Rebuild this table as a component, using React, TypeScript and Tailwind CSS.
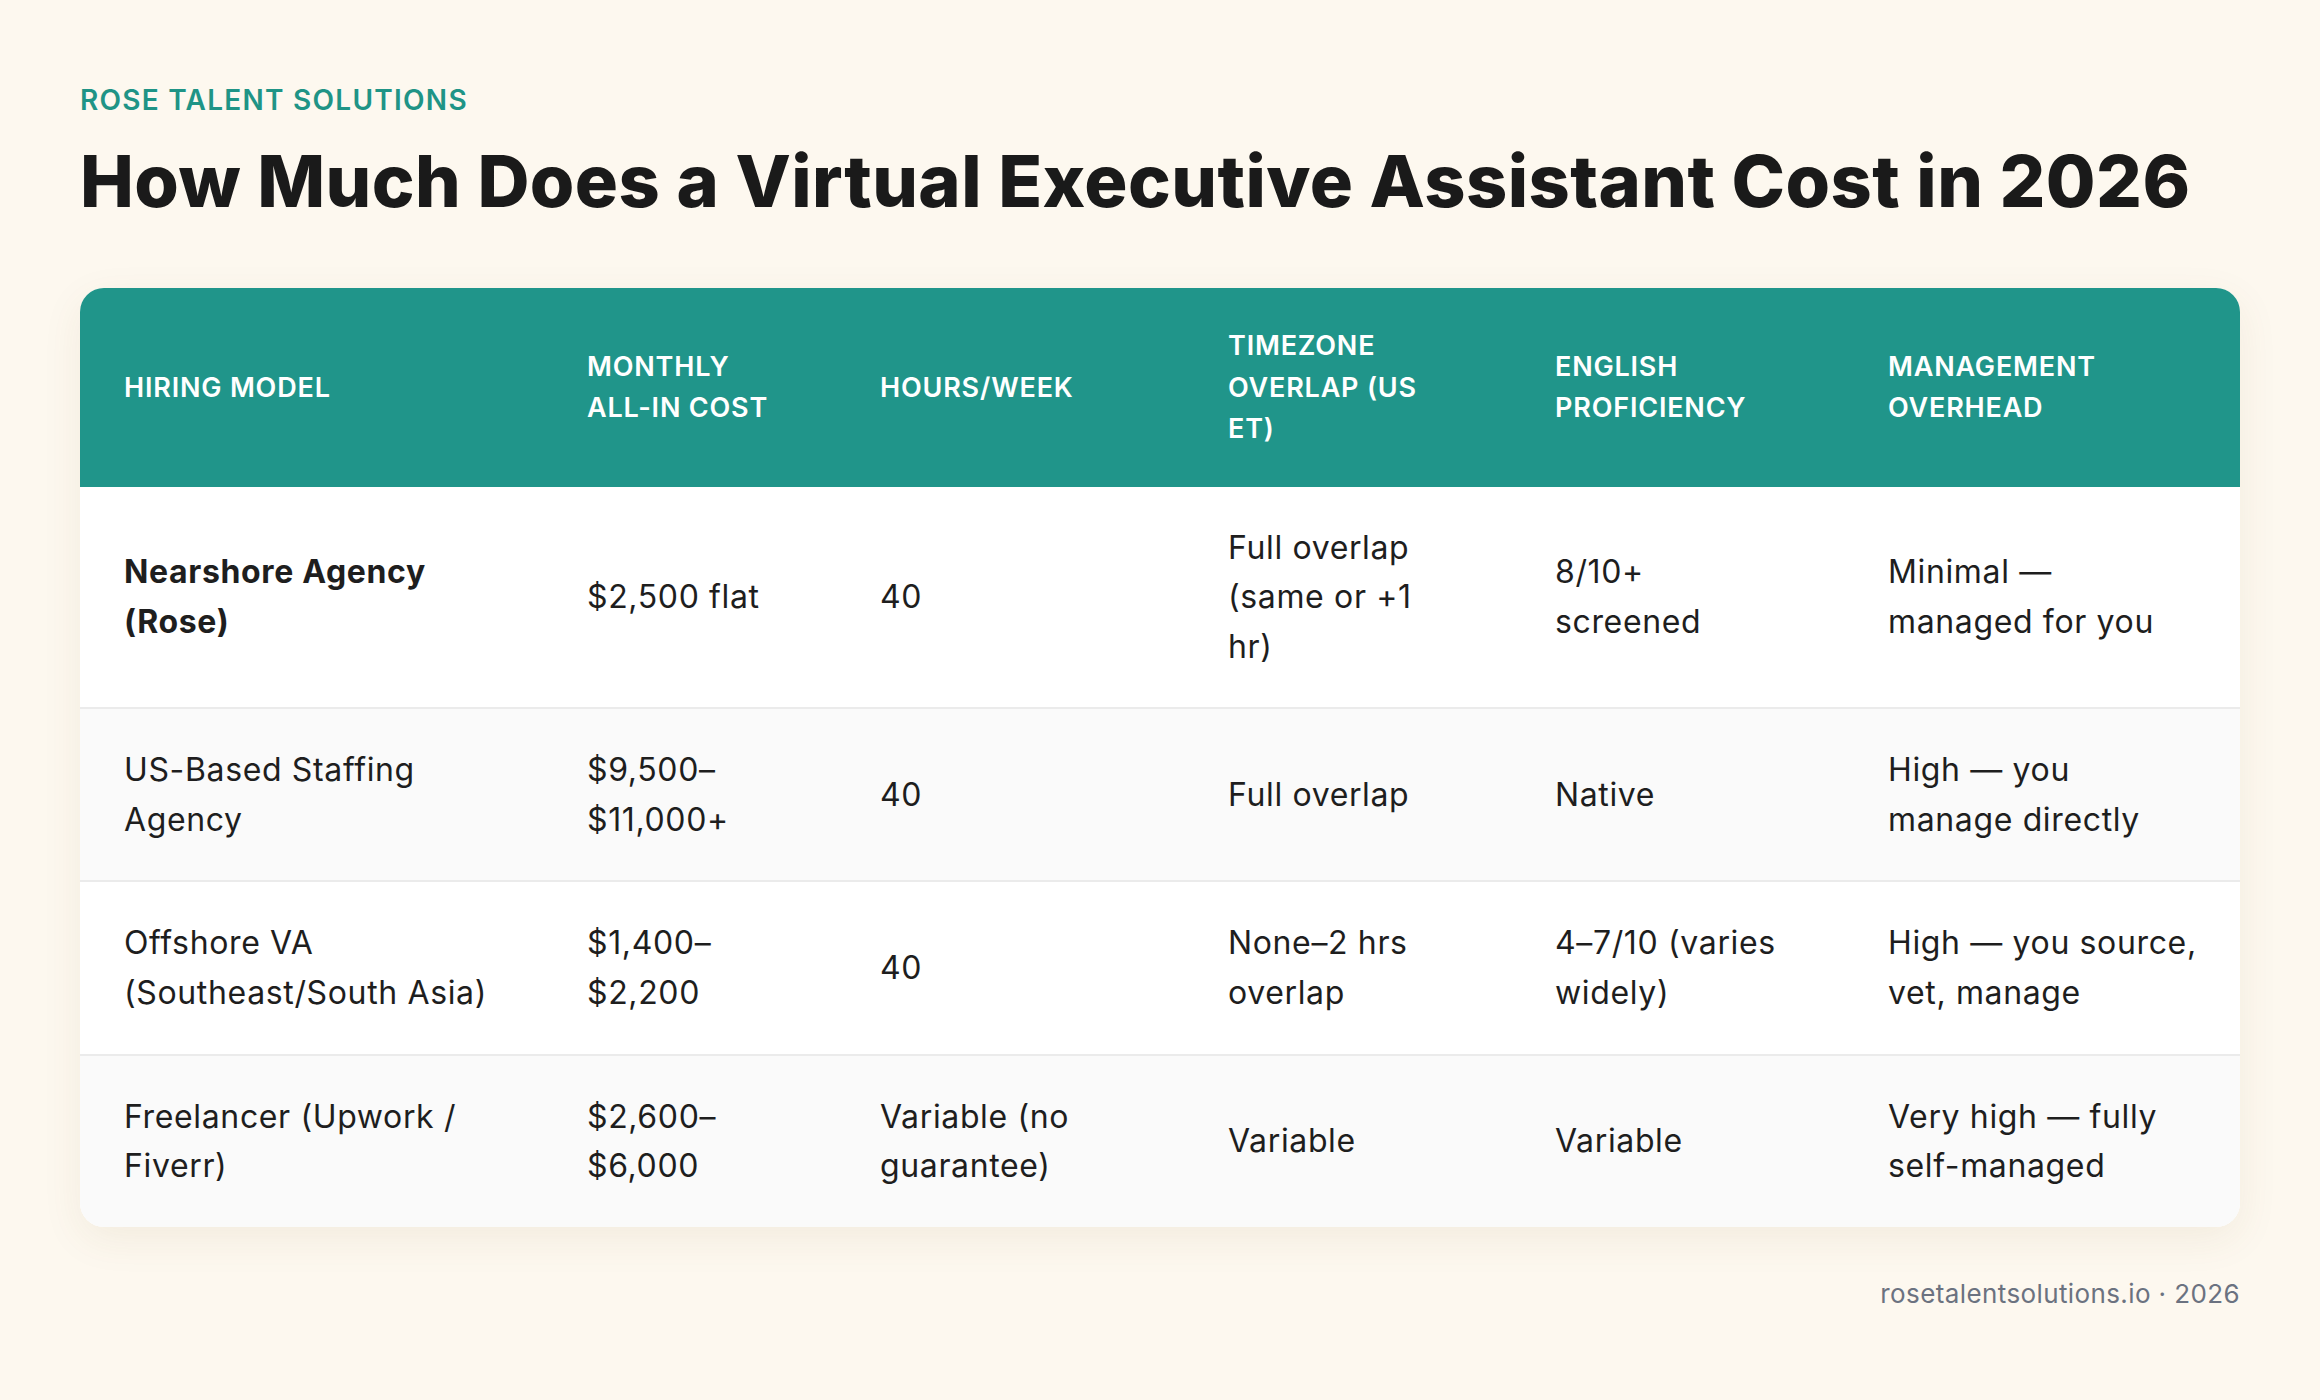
import React from "react";

const headers: string[][] = [
  ["Hiring Model"],
  ["Monthly", "All-in Cost"],
  ["Hours/Week"],
  ["Timezone", "Overlap (US", "ET)"],
  ["English", "Proficiency"],
  ["Management", "Overhead"],
];

const rows: string[][][] = [
  [["Nearshore Agency", "(Rose)"], ["$2,500 flat"], ["40"], ["Full overlap", "(same or +1", "hr)"], ["8/10+", "screened"], ["Minimal —", "managed for you"]],
  [["US-Based Staffing", "Agency"], ["$9,500–", "$11,000+"], ["40"], ["Full overlap"], ["Native"], ["High — you", "manage directly"]],
  [["Offshore VA", "(Southeast/South Asia)"], ["$1,400–", "$2,200"], ["40"], ["None–2 hrs", "overlap"], ["4–7/10 (varies", "widely)"], ["High — you source,", "vet, manage"]],
  [["Freelancer (Upwork /", "Fiverr)"], ["$2,600–", "$6,000"], ["Variable (no", "guarantee)"], ["Variable"], ["Variable"], ["Very high — fully", "self-managed"]],
];

const widths = ["w-[463px]", "w-[293px]", "w-[348px]", "w-[327px]", "w-[333px]", "w-[396px]"];

function Lines({ lines }: { lines: string[] }) {
  return (
    <>
      {lines.map((l, i) => (
        <span key={i} className="block whitespace-nowrap">
          {l}
        </span>
      ))}
    </>
  );
}

export default function App() {
  return (
    <div
      className="min-h-[1400px] w-[2320px] bg-[#fdf8ef] px-[80px] pt-[86px] text-[#1c1c1c]"
      style={{ fontFamily: "Inter, 'Noto Sans', sans-serif" }}
    >
      <div className="text-[28px] leading-[28px] font-semibold tracking-[0.045em] uppercase text-[#1f9486]">
        Rose Talent Solutions
      </div>
      <h1 className="mt-[27px] text-[72px] leading-[79px] font-extrabold tracking-[0.006em] text-[#1a1a1a]">
        How Much Does a Virtual Executive Assistant Cost in 2026
      </h1>
      <div className="mt-[68px] overflow-hidden rounded-[24px] bg-white shadow-[0_12px_40px_rgba(120,90,40,0.08)]">
        <table className="w-[2160px] table-fixed border-collapse">
          <colgroup>
            {widths.map((w, i) => (
              <col key={i} className={w} />
            ))}
          </colgroup>
          <thead>
            <tr className="bg-[#20958a]">
              {headers.map((h, i) => (
                <th
                  key={i}
                  className="px-[44px] py-[37px] text-left align-middle text-[27px] leading-[41.5px] font-semibold uppercase tracking-[0.03em] text-white"
                >
                  <Lines lines={h} />
                </th>
              ))}
            </tr>
          </thead>
          <tbody>
            {rows.map((r, ri) => (
              <tr
                key={ri}
                className={`${ri % 2 === 1 ? "bg-[#fafafa]" : "bg-white"} ${ri < rows.length - 1 ? "border-b-2 border-[#ebebeb]" : ""}`}
              >
                {r.map((c, ci) => (
                  <td
                    key={ci}
                    className={`px-[44px] py-[36px] align-middle text-[32px] leading-[49.6px] tracking-[0.02em] text-[#1e1e1e] ${
                      ri === 0 && ci === 0 ? "font-bold" : "font-normal"
                    }`}
                  >
                    <Lines lines={c} />
                  </td>
                ))}
              </tr>
            ))}
          </tbody>
        </table>
      </div>
      <div className="mt-[54px] text-right text-[26px] leading-[26px] tracking-[0.015em] text-[#6b7280]">
        rosetalentsolutions.io · 2026
      </div>
    </div>
  );
}
